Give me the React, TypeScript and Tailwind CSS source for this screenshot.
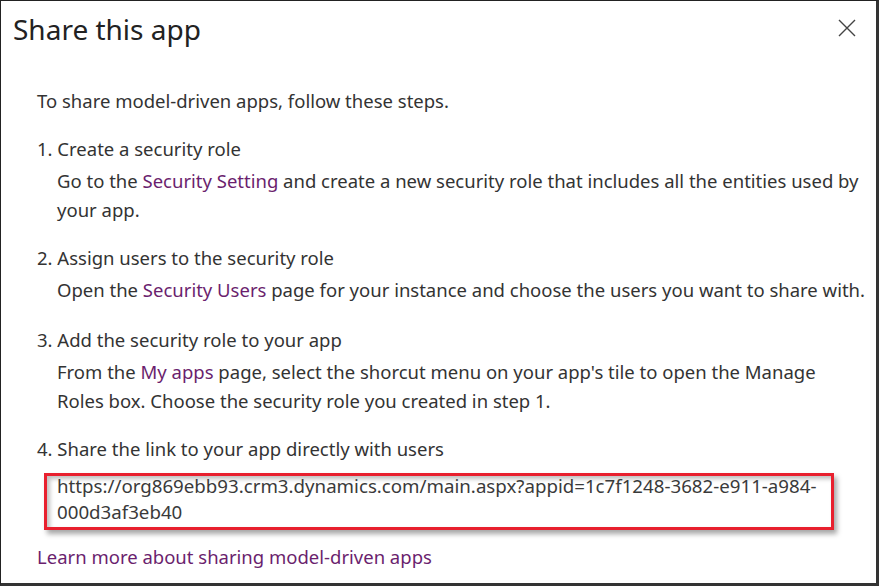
import React from 'react';

const link = 'text-[#6b1f6e]';

function Step({ title, children }: { title: string; children: React.ReactNode }) {
  return (
    <div>
      <p className="leading-[29px]">{title}</p>
      <div className="mt-[3px] pl-[20px] leading-[29px]">{children}</div>
    </div>
  );
}

export default function App() {
  return (
    <div className="h-[586px] w-[879px] bg-white font-['Noto_Sans',sans-serif] text-[#333]">
      <div className="flex h-full w-full flex-col border-t border-l border-r-[3px] border-b-[3px] border-t-[#222] border-l-[#222] border-r-[#333] border-b-[#333]">
        <div className="flex items-start justify-between pl-[12px] pr-[20px] pt-[8px]">
          <h1 className="text-[28px] leading-[40px] text-[#222]">Share this app</h1>
          <svg className="mt-[10px]" width="18" height="18" viewBox="0 0 18 18" fill="none" stroke="#444" strokeWidth="1.4">
            <path d="M1 1 L17 17 M17 1 L1 17" />
          </svg>
        </div>

        <div className="flex flex-col gap-[19px] pl-[36px] pr-[10px] pt-[37px] text-[18.5px]">
          <p className="leading-[29px]">To share model-driven apps, follow these steps.</p>

          <Step title="1. Create a security role">
            Go to the <span className={link}>Security Setting</span> and create a new security role that includes all the entities used by
            <br />
            your app.
          </Step>

          <Step title="2. Assign users to the security role">
            Open the <span className={link}>Security Users</span> page for your instance and choose the users you want to share with.
          </Step>

          <div className="mt-[2px]">
            <Step title="3. Add the security role to your app">
              From the <span className={link}>My apps</span> page, select the shorcut menu on your app's tile to open the Manage
              <br />
              Roles box. Choose the security role you created in step 1.
            </Step>
          </div>

          <div>
            <p className="leading-[29px]">4. Share the link to your app directly with users</p>
            <div className="mt-[10px] ml-[7px] h-[57px] w-[790px] overflow-hidden border-[3px] border-[#e8202e] bg-white pl-[10px] text-[18.7px] text-[#3a3a3a] shadow-[inset_3px_3px_4px_rgba(0,0,0,0.25),3px_4px_5px_rgba(0,0,0,0.35)]">
              <div className="-mt-[3px] whitespace-nowrap leading-[26px]">
                https://org869ebb93.crm3.dynamics.com/main.aspx?appid=1c7f1248-3682-e911-a984-
                <br />
                000d3af3eb40
              </div>
            </div>
          </div>

          <p className={`-mt-[7px] leading-[29px] ${link}`}>Learn more about sharing model-driven apps</p>
        </div>
      </div>
    </div>
  );
}
